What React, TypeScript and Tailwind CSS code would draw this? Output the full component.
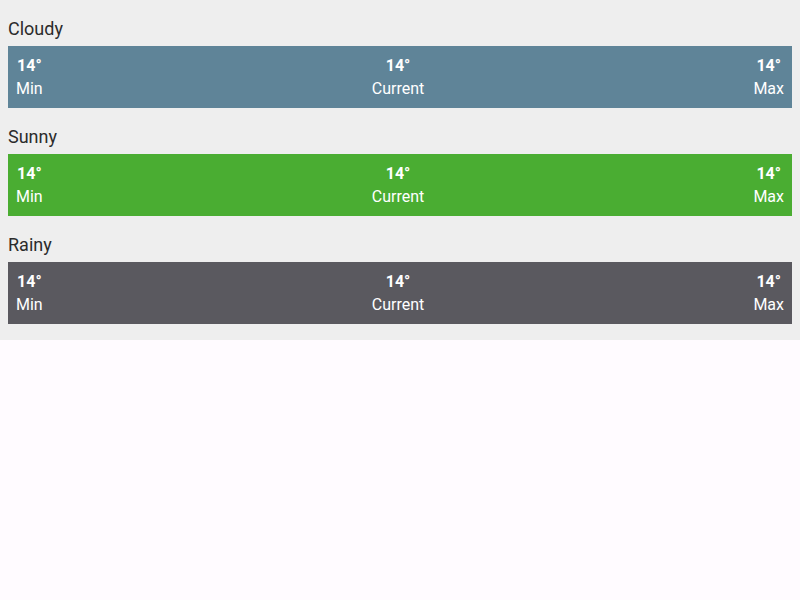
import React from "react";

interface Weather {
  label: string;
  bg: string;
}

const items: Weather[] = [
  { label: "Cloudy", bg: "bg-[#5f8498]" },
  { label: "Sunny", bg: "bg-[#4aad32]" },
  { label: "Rainy", bg: "bg-[#5a595f]" },
];

const App: React.FC = () => {
  return (
    <div className="min-h-screen bg-[#fffbff]" style={{ fontFamily: "Roboto, 'Liberation Sans', sans-serif" }}>
      <div className="bg-[#eeeeee] px-2 pb-4">
        {items.map((w) => (
          <div key={w.label}>
            <div className="h-[46px] pt-[17px] text-[18px] leading-6 text-[#2b2b2b]">{w.label}</div>
            <div className={`${w.bg} flex h-[62px] items-start justify-between p-2 text-[16px] leading-[23px] text-white`}>
              <div className="text-center">
                <div className="font-bold">14°</div>
                <div>Min</div>
              </div>
              <div className="text-center">
                <div className="font-bold">14°</div>
                <div>Current</div>
              </div>
              <div className="text-center">
                <div className="font-bold">14°</div>
                <div>Max</div>
              </div>
            </div>
          </div>
        ))}
      </div>
    </div>
  );
};

export default App;
